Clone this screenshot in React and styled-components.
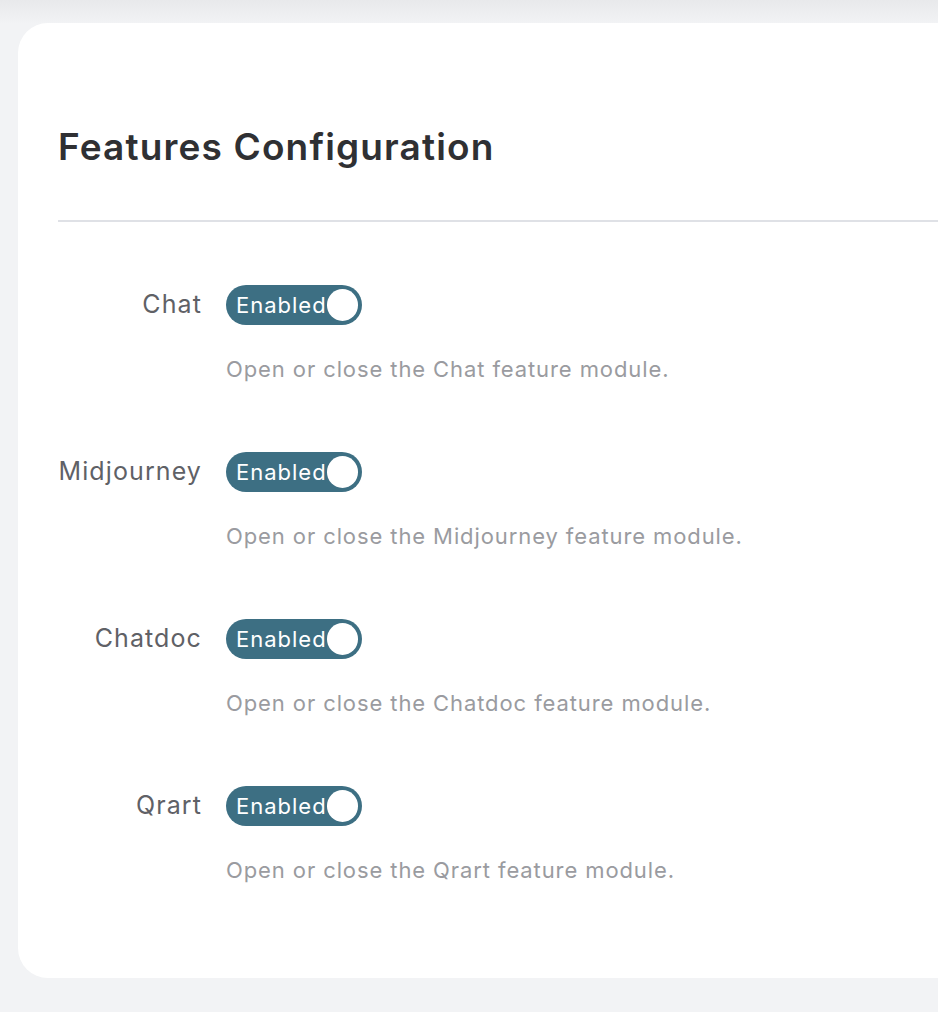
import styled, { createGlobalStyle } from "styled-components";

const GlobalStyle = createGlobalStyle`
  html, body {
    margin: 0;
    padding: 0;
    overflow: hidden;
  }
  body {
    background: linear-gradient(#e8e9eb 0px, #f2f3f5 24px, #f2f3f5 100%);
    font-family: Inter, "Noto Sans", sans-serif;
    min-height: 1012px;
  }
`;

const Page = styled.div`
  padding: 23px 0 34px 18px;
`;

const Card = styled.div`
  width: 1000px;
  background: #ffffff;
  border-radius: 30px;
  padding: 102px 40px 93px;
  box-sizing: border-box;
`;

const Title = styled.h2`
  margin: 0;
  font-size: 37px;
  line-height: 43px;
  font-weight: 600;
  letter-spacing: 1.15px;
  color: #2f3033;
`;

const Divider = styled.div`
  height: 2px;
  background: #dfe1e6;
  margin: 52px 0 63px;
`;

const Row = styled.div`
  display: flex;
  align-items: flex-start;
  margin-bottom: 68px;

  &:last-child {
    margin-bottom: 0;
  }
`;

const Label = styled.label`
  width: 144px;
  padding-right: 24px;
  text-align: right;
  font-size: 25px;
  line-height: 38px;
  letter-spacing: 1.1px;
  color: #5f6166;
  flex-shrink: 0;
`;

const Content = styled.div`
  display: flex;
  flex-direction: column;
  align-items: flex-start;
`;

const Switch = styled.button`
  display: flex;
  align-items: center;
  justify-content: space-between;
  width: 136px;
  height: 40px;
  padding: 0 4px 0 10px;
  box-sizing: border-box;
  border: none;
  border-radius: 20px;
  background: ${(p) => (p.$on ? "#3d6f83" : "#c0c4cc")};
  cursor: pointer;
`;

const SwitchText = styled.span`
  color: #ffffff;
  font-family: Inter, "Noto Sans", sans-serif;
  font-size: 22px;
  letter-spacing: 1px;
  line-height: 1;
`;

const Knob = styled.span`
  width: 32px;
  height: 32px;
  border-radius: 50%;
  background: #ffffff;
`;

const Desc = styled.p`
  margin: 29px 0 0;
  font-size: 22px;
  line-height: 30px;
  letter-spacing: 0.9px;
  color: #9a9ba0;
`;

const features = ["Chat", "Midjourney", "Chatdoc", "Qrart"];

export default function App() {
  return (
    <>
      <GlobalStyle />
      <Page>
        <Card>
          <Title>Features Configuration</Title>
          <Divider />
          {features.map((name) => (
            <Row key={name}>
              <Label>{name}</Label>
              <Content>
                <Switch $on>
                  <SwitchText>Enabled</SwitchText>
                  <Knob />
                </Switch>
                <Desc>Open or close the {name} feature module.</Desc>
              </Content>
            </Row>
          ))}
        </Card>
      </Page>
    </>
  );
}
